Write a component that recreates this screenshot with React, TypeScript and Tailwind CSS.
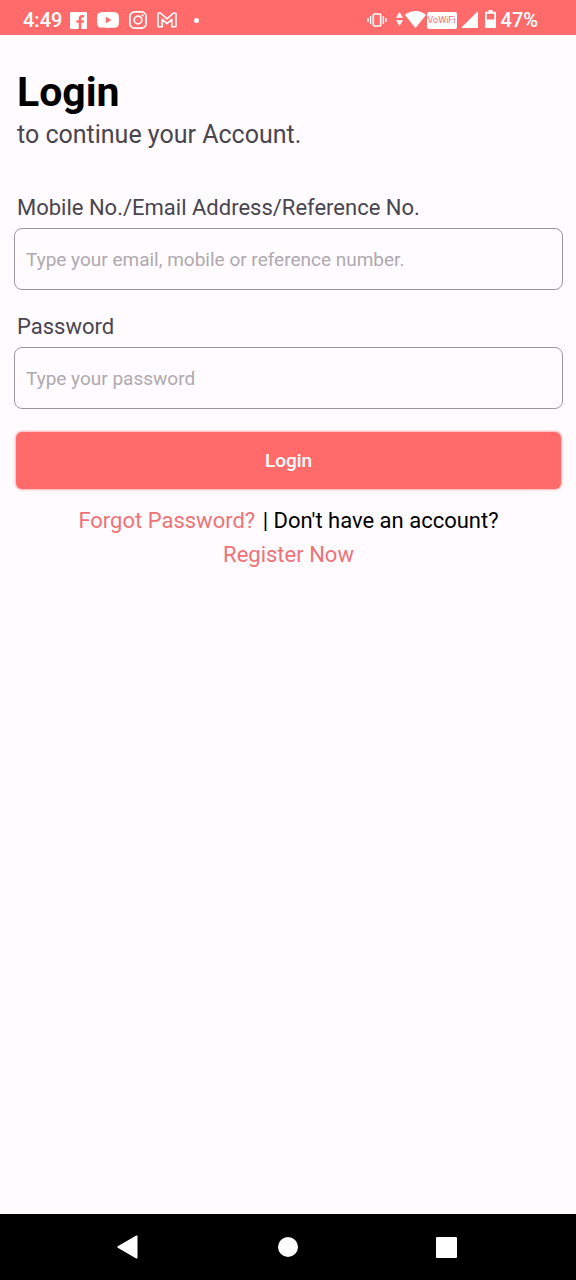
import { useState, type FormEvent, type InputHTMLAttributes } from "react";

function StatusBar() {
  return (
    <header className="flex h-[35px] items-center justify-between bg-[#ff6b6b] pt-[5px] pr-[38px] pl-[23px] text-white">
      {/* clock and notifications */}
      <div className="flex items-center">
        <span className="mr-[8px] text-[20px] leading-[24px] font-medium">4:49</span>
        <svg className="mr-[10px] h-[17px] w-[17px]" viewBox="0 0 17 17" fill="currentColor" aria-label="Facebook">
          <path d="M1 0h15a1 1 0 0 1 1 1v15a1 1 0 0 1-1 1h-4.600v-6.300h2.200l.4-2.500h-2.600V6.700c0-.8.4-1.300 1.400-1.300h1.300V3.100c-.5-.1-1.200-.2-1.900-.2-2.100 0-3.500 1.200-3.500 3.500v1.800H6.400v2.500h2.300V17H1a1 1 0 0 1-1-1V1a1 1 0 0 1 1-1z" />
        </svg>
        <svg className="mr-[10px] h-[16px] w-[22px]" viewBox="0 0 22 16" fill="currentColor" aria-label="YouTube">
          <path fillRule="evenodd" d="M3.200.4C5.500 0 16.500 0 18.800.4c1.500.3 2.500 1.300 2.800 2.800.5 2.300.5 7.300 0 9.600-.3 1.500-1.300 2.500-2.800 2.800-2.300.5-13.300.5-15.600 0-1.500-.3-2.500-1.300-2.800-2.800-.5-2.300-.5-7.300 0-9.600C.7 1.700 1.700.7 3.200.4zM8.800 4.700v6.600l5.700-3.300z" />
        </svg>
        <svg className="mr-[10px] h-[18px] w-[18px]" viewBox="0 0 18 18" fill="none" stroke="currentColor" strokeWidth="1.700" aria-label="Instagram">
          <rect x="0.9" y="0.9" width="16.200" height="16.200" rx="4.600" />
          <circle cx="9" cy="9" r="3.800" />
          <circle cx="13.600" cy="4.400" r="1.100" fill="currentColor" stroke="none" />
        </svg>
        <svg className="h-[16px] w-[20px]" viewBox="0 0 20 16" fill="none" stroke="currentColor" strokeWidth="1.600" strokeLinejoin="round" aria-label="Gmail">
          <path d="M1 2v12c0 .5.300.8.8.8h3.400V7.400L10 11.600l4.800-4.200v7.400h3.400c.5 0 .8-.3.8-.8V2c0-.7-.4-1-1-1h-1.500L10 6.900 3.500 1H2c-.6 0-1 .3-1 1z" />
        </svg>
        <span className="ml-[17px] h-[5px] w-[5px] rounded-full bg-white" />
      </div>

      {/* system icons */}
      <div className="flex items-center">
        <svg className="mr-[9px] h-[14px] w-[20px]" viewBox="0 0 20 14" fill="none" stroke="currentColor" strokeWidth="1.400" aria-label="Vibrate">
          <rect x="6.300" y="1" width="7.400" height="12" rx="1.200" strokeWidth="1.700" />
          <path d="M3.600 3v8M1 5v4M16.400 3v8M19 5v4" />
        </svg>
        <svg className="mr-[2px] mb-[2px] h-[14px] w-[7px]" viewBox="0 0 7 14" fill="currentColor" aria-hidden="true">
          <path d="M3.500 0L7 5.800H0zM3.500 14L7 8.200H0z" />
        </svg>
        <svg className="mr-[1px] mb-[2px] h-[17px] w-[21px]" viewBox="0 0 21 17" fill="currentColor" aria-label="Wi-Fi">
          <path d="M10.500 17L0 4C3 1.400 6.500 0 10.500 0S18 1.400 21 4z" />
        </svg>
        <span className="mr-[4px] flex h-[17px] w-[30px] items-center justify-center rounded-[2px] bg-white text-[9px] leading-[17px] text-[#ff6b6b]">
          VoWiFi
        </span>
        <svg className="mr-[7px] mb-[2px] h-[17px] w-[17px]" viewBox="0 0 17 17" fill="currentColor" aria-label="Signal">
          <path d="M17 0v17H0z" />
        </svg>
        <svg className="mr-[5px] mb-[2px] h-[18px] w-[11px]" viewBox="0 0 11 18" fill="currentColor" aria-label="Battery">
          <path fillRule="evenodd" d="M3.500 0h4v1.800H10a1 1 0 0 1 1 1V17a1 1 0 0 1-1 1H1a1 1 0 0 1-1-1V2.800a1 1 0 0 1 1-1h2.500zM1.800 3.800v5.700h7.400V3.800z" />
        </svg>
        <span className="text-[20px] leading-[24px] font-medium">47%</span>
      </div>
    </header>
  );
}

type FieldProps = InputHTMLAttributes<HTMLInputElement> & { id: string; label: string };

function Field({ id, label, ...rest }: FieldProps) {
  return (
    <div>
      <label htmlFor={id} className="ml-[3px] block text-[22px] leading-[32px] text-[#49454f]">
        {label}
      </label>
      <input
        id={id}
        className="mt-[4px] block h-[62px] w-full rounded-lg border border-[#9b979e] bg-transparent px-[11px] text-[19px] text-[#1c1b1f] placeholder:text-[#aeaaae]"
        {...rest}
      />
    </div>
  );
}

function NavBar() {
  return (
    <nav className="grid h-[66px] grid-cols-3 bg-black px-[50px] text-white">
      <button type="button" aria-label="Back" className="flex items-center justify-center pr-[3px]">
        <svg className="h-[24px] w-[22px]" viewBox="0 0 22 24" fill="currentColor">
          <path d="M.8 11.200L19.200.6c.7-.4 1.300 0 1.300.7v21.400c0 .7-.6 1.100-1.300.7L.8 12.800c-.6-.4-.6-1.200 0-1.600z" />
        </svg>
      </button>
      <button type="button" aria-label="Home" className="flex items-center justify-center">
        <span className="h-[20px] w-[20px] rounded-full bg-white" />
      </button>
      <button type="button" aria-label="Recent apps" className="flex items-center justify-center">
        <span className="h-[21px] w-[21px] rounded-[1px] bg-white" />
      </button>
    </nav>
  );
}

export default function App() {
  const [user, setUser] = useState("");
  const [password, setPassword] = useState("");

  const handleSubmit = (e: FormEvent) => {
    e.preventDefault();
  };

  return (
    <div className="flex min-h-screen flex-col bg-[#fffbff] font-[Roboto,sans-serif]">
      <StatusBar />

      <main className="flex-1 pt-[33px] pr-[13px] pl-[14px]">
        <h1 className="ml-[3px] text-[41px] leading-[48px] font-bold text-black">Login</h1>
        <p className="ml-[3px] text-[25px] leading-[38px] text-[#49454f]">to continue your Account.</p>

        <form onSubmit={handleSubmit} className="mt-[38px] flex flex-col gap-[21px]">
          <Field
            id="user"
            label="Mobile No./Email Address/Reference No."
            type="text"
            placeholder="Type your email, mobile or reference number."
            value={user}
            onChange={(e) => setUser(e.target.value)}
          />
          <Field
            id="password"
            label="Password"
            type="password"
            placeholder="Type your password"
            value={password}
            onChange={(e) => setPassword(e.target.value)}
          />
          <button
            type="submit"
            className="mx-[2px] mt-[2px] h-[57px] rounded-md bg-[#ff6b6b] pt-[2px] text-[19px] font-medium text-white shadow-[0_0_2px_1px_#ff6b6b80]"
          >
            Login
          </button>
        </form>

        {/* links under the form */}
        <div className="mt-[15px] text-center text-[22px] leading-[34px] text-black">
          <p>
            <a href="#forgot" className="mr-[2px] text-[#ee7377]">Forgot Password?</a> | Don't have an account?
          </p>
          <a href="#register" className="text-[#ee7377]">Register Now</a>
        </div>
      </main>

      <NavBar />
    </div>
  );
}
